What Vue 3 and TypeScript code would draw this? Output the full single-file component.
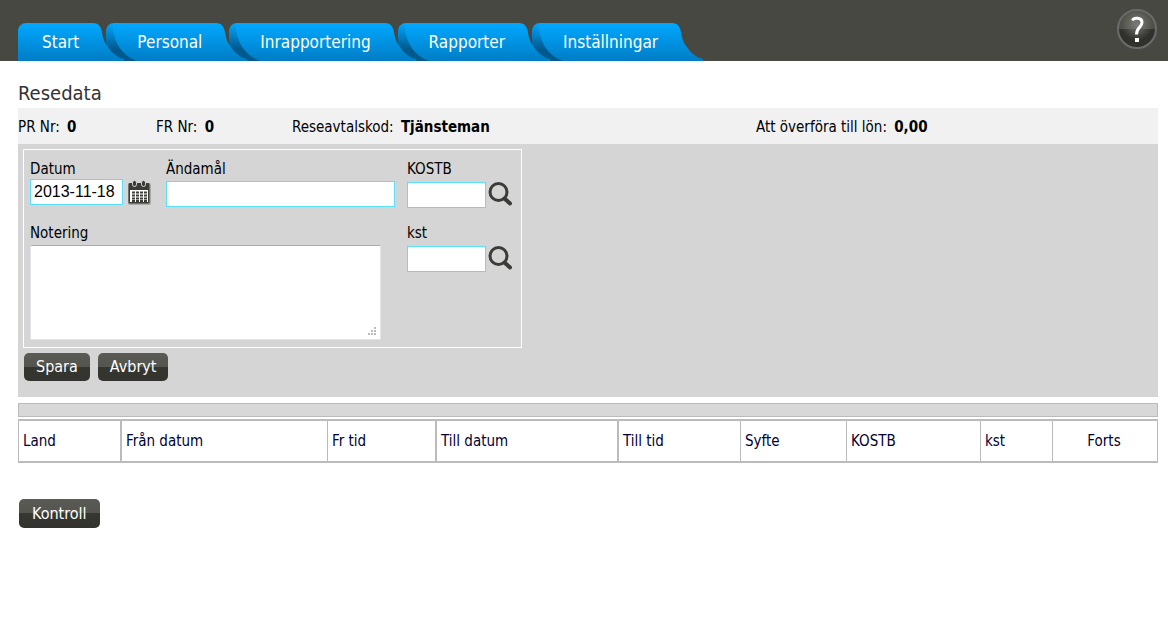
<script setup lang="ts">
import { ref } from 'vue'

const tabs: string[] = ['Start', 'Personal', 'Inrapportering', 'Rapporter', 'Inställningar']

const summary: { label: string; value: string }[] = [
  { label: 'PR Nr:', value: '0' },
  { label: 'FR Nr:', value: '0' },
  { label: 'Reseavtalskod:', value: 'Tjänsteman' },
  { label: 'Att överföra till lön:', value: '0,00' },
]

const columns: string[] = ['Land', 'Från datum', 'Fr tid', 'Till datum', 'Till tid', 'Syfte', 'KOSTB', 'kst', 'Forts']

const date = ref('2013-11-18')
const purpose = ref('')
const kostb = ref('')
const kst = ref('')
const note = ref('')
</script>

<template>
  <div class="page">
    <header class="top">
      <nav class="tabs">
        <a v-for="(tab, i) in tabs" :key="tab" href="#" class="tab">
          <span class="fill"></span>
          <svg v-if="i > 0" class="shade" width="32" height="38" viewBox="0 0 32 38" aria-hidden="true">
            <defs>
              <linearGradient :id="`shade${i}`" x1="0" y1="0" x2="0" y2="38" gradientUnits="userSpaceOnUse">
                <stop offset="0" stop-color="#00548c" stop-opacity="0" />
                <stop offset="0.3" stop-color="#00548c" stop-opacity="0.3" />
                <stop offset="0.7" stop-color="#00507f" stop-opacity="0.85" />
                <stop offset="1" stop-color="#005586" stop-opacity="0.85" />
              </linearGradient>
            </defs>
            <path :fill="`url(#shade${i})`" d="M0 6C0 2 2 0 6 0C7 8 8 14 11 20C15 28 21 34 31 38H0Z" />
          </svg>
          <svg class="tail" width="34" height="38" viewBox="0 0 34 38" aria-hidden="true">
            <defs>
              <linearGradient :id="`tail${i}`" x1="0" y1="0" x2="0" y2="38" gradientUnits="userSpaceOnUse">
                <stop offset="0" stop-color="#00a8ff" />
                <stop offset="1" stop-color="#007dc5" />
              </linearGradient>
            </defs>
            <path :fill="`url(#tail${i})`" d="M0 0H2C8 0 10 4 11 9C12 15 13 19 17 24C21 30 26 34 33 36V38H0Z" />
          </svg>
          <span class="caption">{{ tab }}</span>
        </a>
      </nav>
      <button type="button" class="help" aria-label="Hjälp">
        <svg width="42" height="42" viewBox="0 0 42 42" aria-hidden="true">
          <defs>
            <radialGradient id="helpGlow" cx="0.5" cy="0.42" r="0.5">
              <stop offset="0" stop-color="#8a8a86" stop-opacity="0.75" />
              <stop offset="1" stop-color="#8a8a86" stop-opacity="0" />
            </radialGradient>
          </defs>
          <circle cx="21" cy="21" r="18" fill="#4f4f4a" />
          <path d="M3 21H39A18 18 0 0 1 3 21Z" fill="#30302c" />
          <circle cx="21" cy="19" r="16" fill="url(#helpGlow)" />
          <circle cx="21" cy="21" r="19" fill="none" stroke="#6a6a6a" stroke-width="2" />
          <path d="M16.500 12.500C18 9 26 9.500 26 14.500C26 19.500 20.500 19 20.500 26.500" fill="none" stroke="#fff" stroke-width="3" />
          <rect x="19" y="30" width="4" height="4" fill="#fff" />
        </svg>
      </button>
    </header>

    <main class="content">
      <h1>Resedata</h1>
      <div class="summary">
        <span v-for="item in summary" :key="item.label">{{ item.label }} <b>{{ item.value }}</b></span>
      </div>

      <form class="panel" @submit.prevent>
        <div class="box">
          <div class="field">
            <label for="date">Datum</label>
            <div class="line">
              <input id="date" v-model="date" type="text" class="date" />
              <button type="button" class="icon" aria-label="Välj datum">
                <svg width="24" height="26" viewBox="0 0 24 26" aria-hidden="true">
                  <rect x="1" y="4" width="23" height="22" rx="2" fill="#a9a9a8" />
                  <rect x="1" y="4" width="22" height="21" rx="2" fill="#72726f" />
                  <rect x="2" y="4" width="20" height="20" rx="1" fill="#3b3b37" />
                  <rect x="3" y="11" width="18" height="12" fill="#fff" />
                  <g fill="#3b3b37" stroke="#d6d6d6" stroke-width="1">
                    <rect x="5.500" y="1.500" width="4" height="6" rx="2" />
                    <rect x="14.500" y="1.500" width="4" height="6" rx="2" />
                  </g>
                  <path d="M5 13.500H20M5 16.500H20M5 19.500H20M5 22H20" stroke="#3b3b37" stroke-width="2" stroke-dasharray="3 1" />
                </svg>
              </button>
            </div>
          </div>
          <div class="field lower">
            <label for="purpose">Ändamål</label>
            <input id="purpose" v-model="purpose" type="text" class="purpose" />
          </div>
          <div class="field code">
            <label for="kostb">KOSTB</label>
            <div class="line">
              <input id="kostb" v-model="kostb" type="text" class="short" />
              <button type="button" class="icon" aria-label="Sök KOSTB">
                <svg width="26" height="26" viewBox="0 0 26 26" aria-hidden="true">
                  <circle cx="11.500" cy="10" r="8.500" fill="none" stroke="#3b3b37" stroke-width="3" />
                  <path d="M17.500 16.500L23 21.500" stroke="#3b3b37" stroke-width="4" stroke-linecap="round" />
                </svg>
              </button>
            </div>
          </div>
          <div class="field wide">
            <label for="note">Notering</label>
            <textarea id="note" v-model="note"></textarea>
          </div>
          <div class="field code">
            <label for="kst">kst</label>
            <div class="line">
              <input id="kst" v-model="kst" type="text" class="short" />
              <button type="button" class="icon" aria-label="Sök kst">
                <svg width="26" height="26" viewBox="0 0 26 26" aria-hidden="true">
                  <circle cx="11.500" cy="10" r="8.500" fill="none" stroke="#3b3b37" stroke-width="3" />
                  <path d="M17.500 16.500L23 21.500" stroke="#3b3b37" stroke-width="4" stroke-linecap="round" />
                </svg>
              </button>
            </div>
          </div>
        </div>
        <div class="actions">
          <button type="submit" class="dark">Spara</button>
          <button type="button" class="dark">Avbryt</button>
        </div>
      </form>

      <div class="strip"></div>
      <table>
        <thead>
          <tr>
            <th v-for="column in columns" :key="column" scope="col">{{ column }}</th>
          </tr>
        </thead>
      </table>
      <div class="check">
        <button type="button" class="dark">Kontroll</button>
      </div>
    </main>
  </div>
</template>

<style>
body {
  background: #fff;
}
</style>

<style scoped>
.page {
  font-family: "DejaVu Sans Condensed", "Noto Sans", sans-serif;
  font-size: 15px;
  line-height: 20px;
  color: #000;
}
button,
input,
textarea {
  font: inherit;
  box-sizing: border-box;
  margin: 0;
}
.top {
  display: flex;
  justify-content: space-between;
  align-items: flex-end;
  height: 61px;
  padding: 0 10px 0 18px;
  background: #484842;
}
.tabs {
  display: flex;
}
.tab {
  position: relative;
  padding: 9px 27px 9px 31px;
  font-size: 17px;
  color: #fff;
  text-decoration: none;
}
.tab:first-child {
  padding-left: 24px;
}
.tab:nth-child(1) { z-index: 5; }
.tab:nth-child(2) { z-index: 4; }
.tab:nth-child(3) { z-index: 3; }
.tab:nth-child(4) { z-index: 2; }
.tab:nth-child(5) { z-index: 1; }
.fill {
  position: absolute;
  inset: 0 15px 0 0;
  border-radius: 8px 0 0 0;
  background: linear-gradient(#00a8ff, #007dc5);
}
.shade {
  position: absolute;
  left: 0;
  top: 0;
}
.tail {
  position: absolute;
  right: -19px;
  top: 0;
}
.caption {
  position: relative;
}
.help,
.icon {
  display: block;
  padding: 0;
  border: 0;
  background: none;
  cursor: pointer;
}
.help {
  height: 42px;
  margin-bottom: 11px;
}
.help svg,
.icon svg {
  display: block;
}
.content {
  padding: 20px 10px 20px 18px;
}
h1 {
  margin: 0;
  font-size: 20px;
  line-height: 24px;
  font-weight: 400;
  color: #333;
  padding-bottom: 3px;
}
.summary {
  display: grid;
  grid-template-columns: 138fr 136fr 464fr 402fr;
  padding: 9px 0 7px;
  background: #f1f1f1;
}
.summary b {
  margin-left: 3px;
}
.panel {
  padding: 5px 5px 16px;
  background: #d5d5d5;
}
.box {
  display: grid;
  grid-template-columns: 136px 241px auto;
  row-gap: 15px;
  width: fit-content;
  padding: 9px 8px 7px 6px;
  border: 1px solid #fff;
}
.field {
  display: flex;
  flex-direction: column;
  align-items: flex-start;
}
.field.wide {
  grid-column: span 2;
}
.field.lower {
  gap: 2px;
}
.field.code {
  gap: 3px;
}
.line {
  display: flex;
  align-items: center;
}
input {
  height: 26px;
  padding: 0 3px;
  border: 1px solid #5ae0fc;
  background: #fff;
  font-family: "Liberation Sans", Arial, sans-serif;
  font-size: 16px;
}
.date {
  width: 93px;
  margin-right: 4px;
}
.purpose {
  width: 229px;
}
.short {
  width: 79px;
  margin-right: 1px;
}
textarea {
  width: 351px;
  height: 95px;
  margin-top: 2px;
  border: 1px solid #e0e3e9;
  border-top-color: #aaa;
  border-radius: 2px;
  background: #fff;
}
textarea::-webkit-resizer {
  background:
    linear-gradient(#bbb, #bbb) 9px 3px / 2px 2px no-repeat,
    linear-gradient(#bbb, #bbb) 6px 6px / 2px 2px no-repeat,
    linear-gradient(#bbb, #bbb) 9px 6px / 2px 2px no-repeat,
    linear-gradient(#bbb, #bbb) 3px 9px / 2px 2px no-repeat,
    linear-gradient(#bbb, #bbb) 6px 9px / 2px 2px no-repeat,
    linear-gradient(#bbb, #bbb) 9px 9px / 2px 2px no-repeat;
}
.actions {
  display: flex;
  gap: 8px;
  padding: 5px 1px 0;
}
.dark {
  height: 28px;
  padding: 0 12px;
  border: 0;
  border-radius: 5px;
  background: linear-gradient(#5b5b55, #55554f 50%, #363631 50%, #33332f);
  color: #fff;
  font-size: 16px;
  cursor: pointer;
}
.strip {
  height: 12px;
  margin: 6px 0 2px;
  border: 1px solid #bbb;
  background: #d8d8d8;
}
table {
  width: 100%;
  table-layout: fixed;
  border-collapse: separate;
  border-spacing: 0;
  border: solid #bbb;
  border-width: 2px 0 2px 1px;
  color: #000033;
}
th {
  box-sizing: border-box;
  height: 40px;
  padding: 0 0 0 4px;
  border-right: 1px solid #bbb;
  font-weight: 400;
  text-align: left;
}
th:nth-child(1) { width: 103px; border-right-width: 2px; }
th:nth-child(2) { width: 206px; }
th:nth-child(3) { width: 109px; border-right-width: 2px; }
th:nth-child(4) { width: 182px; border-right-width: 2px; }
th:nth-child(5) { width: 122px; }
th:nth-child(6) { width: 106px; }
th:nth-child(7) { width: 134px; }
th:nth-child(8) { width: 72px; }
th:nth-child(9) { width: 105px; padding: 0 2px 0 0; text-align: center; }
.check {
  padding: 36px 1px 0;
}
.check .dark {
  height: 29px;
  padding: 0 13px;
}
</style>
